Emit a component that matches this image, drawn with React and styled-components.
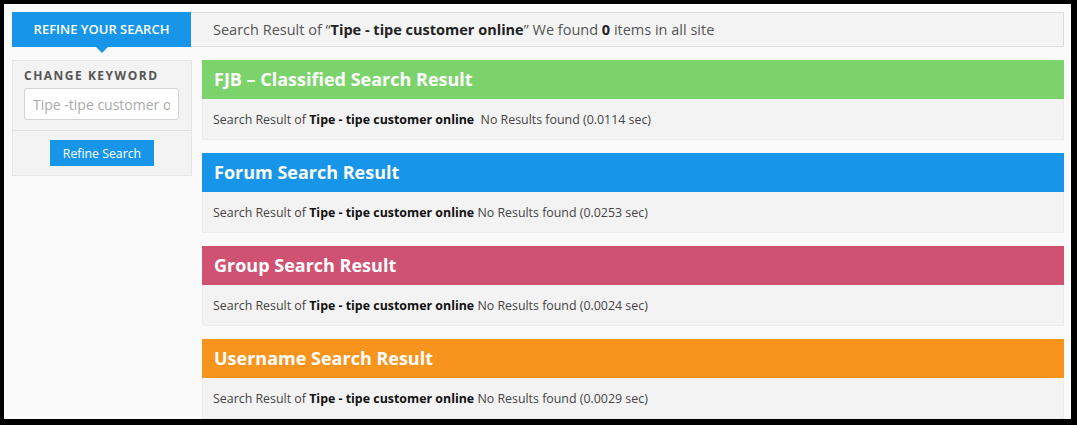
import React from 'react';
import styled, { createGlobalStyle } from 'styled-components';

const query = 'Tipe - tipe customer online';

const results = [
    { title: 'FJB \u2013 Classified Search Result', color: '#7dd36b', time: '0.0114', gap: true },
    { title: 'Forum Search Result', color: '#1795e8', time: '0.0253' },
    { title: 'Group Search Result', color: '#cf5272', time: '0.0024' },
    { title: 'Username Search Result', color: '#f7941d', time: '0.0029' },
];

const App = () => {
    return (
        <>
            <GlobalStyle />
            <Frame>
                <TopRow>
                    <Tab>Refine Your Search</Tab>
                    <Summary>
                        Search Result of &ldquo;<b>{query}</b>&rdquo; We found <b>0</b> items in all site
                    </Summary>
                </TopRow>
                <Content>
                    <Sidebar>
                        <KeywordBox>
                            <Label>Change Keyword</Label>
                            <Input placeholder="Tipe -tipe customer online" />
                        </KeywordBox>
                        <ButtonBox>
                            <Button>Refine Search</Button>
                        </ButtonBox>
                    </Sidebar>
                    <Main>
                        {results.map((r) => (
                            <Section key={r.title}>
                                <SectionHeader $color={r.color}>{r.title}</SectionHeader>
                                <SectionBody>
                                    Search Result of <b>{query}</b>{r.gap ? '\u00a0 ' : ' '}No Results found ({r.time} sec)
                                </SectionBody>
                            </Section>
                        ))}
                    </Main>
                </Content>
            </Frame>
        </>
    );
};

export default App;

const GlobalStyle = createGlobalStyle`
    html, body {
        margin: 0;
        padding: 0;
        background: #000;
    }
    body {
        font-family: "Open Sans", "Liberation Sans", sans-serif;
        overflow: hidden;
    }
    * {
        box-sizing: border-box;
    }
`;

const Frame = styled.div`
    margin: 4px 6px 0 4px;
    height: 415px;
    overflow: hidden;
    background: #fafafa;
    padding: 8px 7px 0 8px;
`;

const TopRow = styled.div`
    display: flex;
    height: 35px;
`;

const Tab = styled.div`
    position: relative;
    width: 179px;
    background: #1795e8;
    color: #fff;
    font-size: 13px;
    font-weight: 600;
    line-height: 35px;
    text-align: center;
    text-transform: uppercase;

    &::after {
        content: '';
        position: absolute;
        left: 84px;
        bottom: -6px;
        border-left: 6px solid transparent;
        border-right: 6px solid transparent;
        border-top: 6px solid #1795e8;
    }
`;

const Summary = styled.div`
    flex: 1;
    background: #f4f4f4;
    border: 1px solid #dcdcdc;
    border-left: none;
    padding-left: 22px;
    font-size: 14.5px;
    line-height: 33px;
    color: #555;
    white-space: nowrap;

    b {
        color: #222;
        font-weight: 700;
    }
`;

const Content = styled.div`
    display: flex;
    align-items: flex-start;
    gap: 10px;
    margin-top: 13px;
`;

const Sidebar = styled.div`
    width: 180px;
    background: #f3f3f3;
    border: 1px solid #e6e6e6;
`;

const KeywordBox = styled.div`
    padding: 6px 11px 10px;
    border-bottom: 1px solid #e0e0e0;
`;

const Label = styled.div`
    font-size: 12px;
    font-weight: 700;
    letter-spacing: 1.5px;
    line-height: 18px;
    text-transform: uppercase;
    color: #555;
    margin-bottom: 3px;
`;

const Input = styled.input`
    display: block;
    width: 155px;
    height: 32px;
    border: 1px solid #d3d3d3;
    border-radius: 3px;
    background: #fff;
    padding: 0 8px;
    font-family: inherit;
    font-size: 14px;
    color: #555;

    &::placeholder {
        color: #aaa;
    }
`;

const ButtonBox = styled.div`
    display: flex;
    justify-content: center;
    padding: 9px 0 9px;
`;

const Button = styled.button`
    width: 104px;
    height: 26px;
    border: none;
    background: #1795e8;
    color: #fff;
    font-family: inherit;
    font-size: 12.3px;
    padding: 0;
`;

const Main = styled.div`
    flex: 1;
    display: flex;
    flex-direction: column;
    gap: 13px;
`;

const Section = styled.div`
    background: #f3f3f3;
    border: 1px solid #ececec;
    border-top: none;
`;

const SectionHeader = styled.div`
    height: 39px;
    margin: 0 -1px;
    background: ${(p) => p.$color};
    color: #fff;
    font-size: 18px;
    font-weight: 700;
    line-height: 38px;
    padding-left: 12px;
`;

const SectionBody = styled.div`
    height: 40px;
    padding-left: 10px;
    font-size: 12.4px;
    line-height: 41px;
    color: #444;
    white-space: nowrap;

    b {
        color: #111;
        font-weight: 700;
    }
`;
